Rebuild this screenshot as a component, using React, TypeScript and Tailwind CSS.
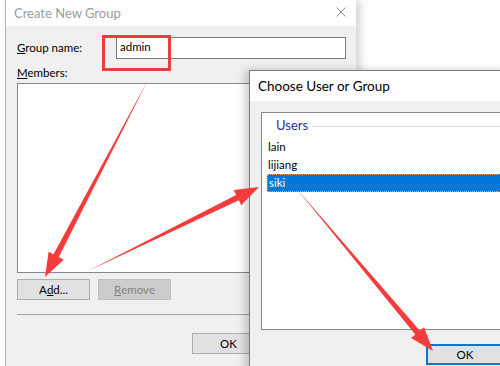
import React from "react";

const font = { fontFamily: 'Lato, "Noto Sans", "Liberation Sans", sans-serif' };

// tapered red arrow: thin tail growing into a wide head
function arrowPath(x0: number, y0: number, x1: number, y1: number, w = 5, L = 22, H = 16) {
  const dx = x1 - x0;
  const dy = y1 - y0;
  const len = Math.hypot(dx, dy);
  const ux = dx / len;
  const uy = dy / len;
  const nx = -uy;
  const ny = ux;
  const bx = x1 - ux * L;
  const by = y1 - uy * L;
  const p = (x: number, y: number) => `${x.toFixed(1)},${y.toFixed(1)}`;
  return [
    p(x0, y0),
    p(bx + (nx * w) / 2, by + (ny * w) / 2),
    p(bx + (nx * H) / 2, by + (ny * H) / 2),
    p(x1, y1),
    p(bx - (nx * H) / 2, by - (ny * H) / 2),
    p(bx - (nx * w) / 2, by - (ny * w) / 2),
  ].join(" ");
}

function Btn({ children, disabled, focused, className = "" }: { children: React.ReactNode; disabled?: boolean; focused?: boolean; className?: string }) {
  return (
    <div
      className={`h-[21px] w-[73px] flex items-center justify-center text-[11.5px] ${
        disabled
          ? "bg-[#cccccc] border border-[#bfbfbf] text-[#838383]"
          : focused
          ? "bg-[#e1e1e1] border-2 border-[#0078d7] text-black"
          : "bg-[#e1e1e1] border border-[#adadad] text-black"
      } ${className}`}
    >
      {children}
    </div>
  );
}

export default function App() {
  return (
    <div className="relative w-[500px] h-[366px] overflow-hidden bg-white" style={font}>
      {/* Create New Group dialog */}
      <div className="absolute left-[5px] top-0 w-[351px] h-[380px] flex flex-col border-l border-[#b4b4b4] shadow-[4px_0_8px_rgba(0,0,0,0.18)]">
        <div className="h-[26px] bg-white flex items-center justify-between pl-[8px] pr-[10px]">
          <span className="text-[13px] text-[#9b9b9b] leading-none">Create New Group</span>
          <svg width="10" height="10" viewBox="0 0 10 10" className="mt-[-3px]">
            <path d="M0.5 0.5 L9.5 9.5 M9.5 0.5 L0.5 9.5" stroke="#8a8a8a" strokeWidth="1" />
          </svg>
        </div>
        <div className="flex-1 bg-[#f0f0f0] pl-[11px] pr-[10px] pt-[11px] flex flex-col">
          <div className="flex items-center h-[22px]">
            <span className="w-[99px] text-[11.5px] text-black">
              <span className="underline">G</span>roup name:
            </span>
            <div className="flex-1 h-[22px] bg-white border border-[#7a7a7a] px-[3px] text-[11.5px] leading-[17px] text-black">admin</div>
          </div>
          <div className="mt-[5px] text-[11.5px] text-black leading-[18px]">
            <span className="underline">M</span>embers:
          </div>
          <div className="mt-[1px] h-[190px] bg-white border border-[#828790]" />
          <div className="mt-[6px] flex gap-[8px]">
            <Btn>
              A<span className="underline">d</span>d...
            </Btn>
            <Btn disabled>
              <span className="underline">R</span>emove
            </Btn>
          </div>
          <div className="mt-[14px] h-px bg-[#a0a0a0]" />
          <div className="mt-[18px] pl-[175px]">
            <Btn>OK</Btn>
          </div>
        </div>
      </div>

      {/* Choose User or Group dialog */}
      <div className="absolute left-[249px] top-[70px] w-[260px] h-[310px] flex flex-col border-t border-l border-[#7c7c7c] shadow-[-4px_0_8px_rgba(0,0,0,0.2)]">
        <div className="h-[30px] bg-white flex items-center pl-[8px]">
          <span className="text-[13.5px] text-black">Choose User or Group</span>
        </div>
        <div className="flex-1 bg-[#f0f0f0] pl-[11px] pt-[11px] flex flex-col">
          <div className="h-[218px] bg-white border border-[#828790] border-r-0 pl-[5px] pt-[4px] flex flex-col">
            <div className="flex items-center h-[18px]">
              <span className="pl-[9px] pr-[4px] text-[13px] text-[#2e2ea0]">Users</span>
              <div className="flex-1 h-px bg-[#d5dff0]" />
            </div>
            <div className="mt-[3px] h-[18px] pl-[1px] text-[11.5px] leading-[18px] text-black">lain</div>
            <div className="h-[18px] pl-[1px] text-[11.5px] leading-[18px] text-black">lijiang</div>
            <div className="h-[18px] pl-[1px] text-[11.5px] leading-[16px] text-white bg-[#0078d7] border border-dotted border-[#f5a05a]">siki</div>
          </div>
          <div className="mt-[14px] pl-[165px]">
            <Btn focused className="w-[78px] h-[21px]">OK</Btn>
          </div>
        </div>
      </div>

      {/* red callout box + arrows */}
      <div className="absolute left-[102px] top-[35px] w-[69px] h-[36px] border-[3px] border-[#f03c3c]" />
      <svg className="absolute left-0 top-0" width="500" height="366">
        <polygon points={arrowPath(148, 80, 45, 277, 6, 24, 17)} fill="#f53b3b" />
        <polygon points={arrowPath(88, 271, 259, 187, 6, 24, 17)} fill="#f53b3b" />
        <polygon points={arrowPath(296, 188, 433, 351, 6, 24, 17)} fill="#f53b3b" />
      </svg>
    </div>
  );
}
